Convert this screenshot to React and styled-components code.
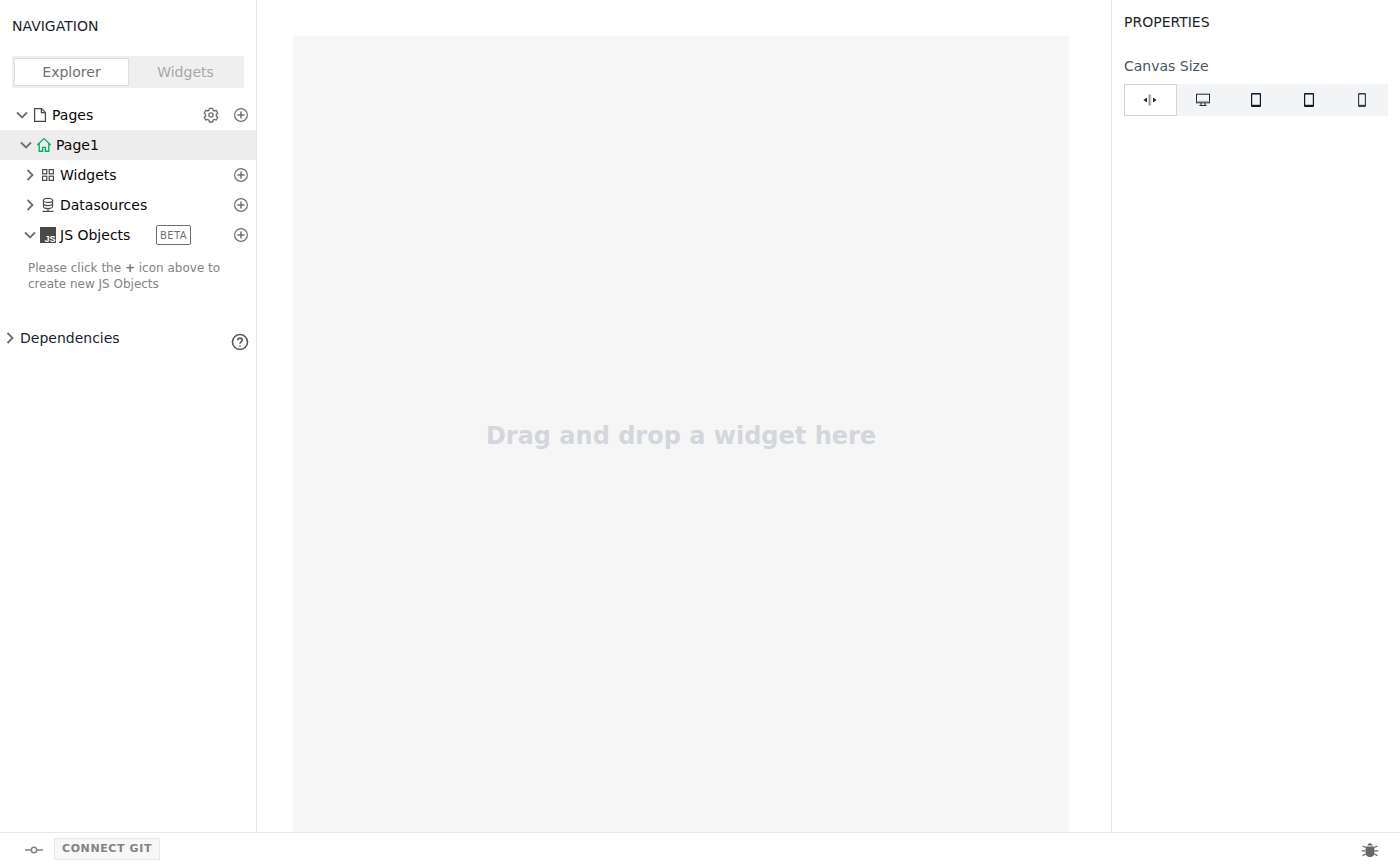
import React from "react";
import styled, { createGlobalStyle } from "styled-components";

const Global = createGlobalStyle`
  html, body { margin: 0; padding: 0; height: 100%; overflow: hidden; background: #fff; }
  body { font-family: "DejaVu Sans", sans-serif; }
  #root { height: 866px; }
  * { box-sizing: border-box; }
`;

const Page = styled.div`
  width: 1400px;
  height: 866px;
  display: flex;
  flex-direction: column;
`;
const Body = styled.div`
  flex: 1;
  min-height: 0;
  display: flex;
`;
const LeftPane = styled.aside`
  width: 257px;
  flex: none;
  border-right: 1px solid #e7e7e7;
  display: flex;
  flex-direction: column;
`;
const PaneTitle = styled.div`
  font-size: 14px;
  line-height: 20px;
  color: #191f2c;
  padding: ${(p) => p.$pad};
`;
const Tabs = styled.div`
  margin: 20px 12px 12px;
  height: 32px;
  background: #efefef;
  padding: 2px;
  display: grid;
  grid-template-columns: 115px 1fr;
`;
const Tab = styled.div`
  font-size: 14px;
  display: flex;
  align-items: center;
  justify-content: center;
  color: ${(p) => (p.$active ? "#716e6e" : "#a9a7a7")};
  background: ${(p) => (p.$active ? "#fff" : "transparent")};
  border: ${(p) => (p.$active ? "1px solid #e0dede" : "none")};
`;
const Row = styled.div`
  height: 30px;
  display: flex;
  align-items: center;
  padding-left: ${(p) => p.$indent}px;
  padding-right: 7px;
  background: ${(p) => (p.$selected ? "#ededed" : "transparent")};
`;
const ChevronSlot = styled.span`
  width: 16px;
  height: 16px;
  flex: none;
  display: flex;
  align-items: center;
  justify-content: center;
  margin-top: ${(p) => p.$top ?? 0}px;
`;
const IconSlot = styled.span`
  width: 16px;
  height: 16px;
  flex: none;
  margin: 0 4px 0 2px;
  display: flex;
  align-items: center;
  justify-content: center;
`;
const RowLabel = styled.span`
  flex: 1;
  font-size: 14px;
  line-height: 20px;
  color: #090707;
  white-space: nowrap;
`;
const DepsLabel = styled.span`
  font-size: 14px;
  line-height: 20px;
  margin-left: 2px;
  color: #191f2c;
  white-space: nowrap;
`;
const Action = styled.span`
  width: 16px;
  height: 16px;
  flex: none;
  display: flex;
  margin-left: ${(p) => p.$gap ?? 0}px;
`;
const Beta = styled.span`
  width: 35px;
  height: 20px;
  margin-right: 42px;
  border: 1px solid #716e6e;
  border-radius: 2px;
  font-size: 10px;
  letter-spacing: 0.4px;
  color: #716e6e;
  display: flex;
  align-items: center;
  justify-content: center;
`;
const Hint = styled.p`
  margin: 10px 24px 0 28px;
  font-size: 12px;
  line-height: 16px;
  color: #858282;
  strong { font-weight: 700; color: #716e6e; }
`;
const DepsRow = styled.div`
  margin-top: 36px;
  height: 20px;
  display: flex;
  align-items: flex-start;
  padding: 0 8px 0 2px;
`;
const HelpIcon = styled.span`
  margin-left: auto;
  margin-top: 5px;
  margin-right: -1px;
  display: flex;
  width: 18px;
  height: 18px;
`;
const Main = styled.main`
  flex: 1;
  min-width: 0;
  padding: 36px 42px 0 36px;
  display: flex;
`;
const Canvas = styled.div`
  flex: 1;
  background: #f6f6f6;
  display: flex;
  justify-content: center;
  padding-top: 382px;
`;
const Placeholder = styled.div`
  font-size: 24px;
  font-weight: 700;
  line-height: 36px;
  height: 36px;
  color: #d3d6dd;
`;
const RightPane = styled.aside`
  width: 289px;
  flex: none;
  border-left: 1px solid #e7e7e7;
  padding: 12px 12px 0;
`;
const FieldLabel = styled.div`
  margin-top: 24px;
  font-size: 14px;
  line-height: 20px;
  color: #4b5563;
`;
const Sizes = styled.div`
  margin-top: 8px;
  height: 32px;
  width: 264px;
  background: #f3f4f6;
  display: grid;
  grid-template-columns: repeat(5, 1fr);
`;
const SizeBtn = styled.div`
  display: flex;
  align-items: center;
  justify-content: center;
  background: ${(p) => (p.$active ? "#fff" : "transparent")};
  border: ${(p) => (p.$active ? "1px solid #d1d5db" : "none")};
`;
const BottomBar = styled.footer`
  height: 34px;
  flex: none;
  border-top: 1px solid #e7e7e7;
  display: flex;
  align-items: center;
  padding: 0 21px 0 25px;
`;
const GitIcon = styled.span`
  width: 18px;
  height: 10px;
  display: flex;
  margin-right: 11px;
`;
const GitBtn = styled.div`
  width: 106px;
  height: 22px;
  background: #f7f7f7;
  border: 1px solid #e7e7e7;
  color: #858282;
  font-size: 11px;
  font-weight: 700;
  letter-spacing: 0.6px;
  display: flex;
  align-items: center;
  justify-content: center;
  margin-top: -1px;
  padding-bottom: 2px;
`;
const BugIcon = styled.span`
  margin-left: auto;
  width: 18px;
  height: 18px;
  display: flex;
`;

const Chevron = ({ open }) => (
  <svg width="16" height="16" viewBox="0 0 16 16" fill="none" stroke="#716e6e" strokeWidth="1.8">
    {open ? <path d="M3 5.5 8 10.5 13 5.5" /> : <path d="M5.5 3 10.5 8 5.5 13" />}
  </svg>
);
const Plus = () => (
  <svg width="16" height="16" viewBox="0 0 16 16" fill="none" stroke="#716e6e" strokeWidth="1.2">
    <circle cx="8" cy="8" r="6.4" />
    <path d="M8 4.5v7M4.5 8h7" strokeWidth="1.5" />
  </svg>
);
const Gear = () => (
  <svg width="16" height="16" viewBox="0 0 24 24" fill="none" stroke="#716e6e" strokeWidth="2">
    <path d="M9.6 2.5h4.8l.7 2.9 1.7 1 2.9-.8 2.4 4.1-2.1 2.1v2l2.1 2.1-2.4 4.1-2.9-.8-1.7 1-.7 2.8H9.6l-.7-2.8-1.7-1-2.9.8-2.4-4.1 2.1-2.1v-2L1.9 9.7l2.4-4.1 2.9.8 1.7-1z" transform="translate(0 -.5)" />
    <circle cx="12" cy="12" r="3.2" />
  </svg>
);
const FileIcon = () => (
  <svg width="16" height="16" viewBox="0 0 16 16" fill="none" stroke="#4b4848" strokeWidth="1.3">
    <path d="M2.6 1.6h7l3.8 3.8v9H2.6zM9.4 1.6v4h4" />
  </svg>
);
const Home = () => (
  <svg width="16" height="16" viewBox="0 0 16 16" fill="none" stroke="#03b365" strokeWidth="1.4">
    <path d="M1.2 8 8 1.6 14.8 8M3.2 6.6v7.6h3.4v-3.8h2.8v3.8h3.4V6.6" />
  </svg>
);
const Grid = () => (
  <svg width="14" height="14" viewBox="0 0 14 14" fill="none" stroke="#4b4848" strokeWidth="1.2">
    <rect x="1.6" y="1.6" width="4.2" height="4.2" />
    <rect x="8.2" y="1.6" width="4.2" height="4.2" />
    <rect x="1.6" y="8.2" width="4.2" height="4.2" />
    <rect x="8.2" y="8.2" width="4.2" height="4.2" />
  </svg>
);
const Db = () => (
  <svg width="16" height="16" viewBox="0 0 16 16" fill="none" stroke="#4b4848" strokeWidth="1.1">
    <ellipse cx="8" cy="3.4" rx="4.6" ry="2" />
    <path d="M3.4 3.4v6.2c0 1.1 2 2 4.6 2s4.6-.9 4.6-2V3.4M3.4 6.6c0 1.1 2 2 4.6 2s4.6-.9 4.6-2M8 11.6v2.6M2.5 14.4h11" />
  </svg>
);
const Js = () => (
  <svg width="16" height="16" viewBox="0 0 16 16">
    <rect width="16" height="16" fill="#4b4848" />
    <text x="15.5" y="14.5" textAnchor="end" fontSize="9" fontWeight="700" fontFamily="Liberation Sans, sans-serif" fill="#fff">JS</text>
  </svg>
);
const Help = () => (
  <svg width="18" height="18" viewBox="0 0 18 18" fill="none" stroke="#5a5858" strokeWidth="1.6">
    <circle cx="9" cy="9" r="7.5" />
    <path d="M6.8 7.2c0-1.3 1-2.1 2.3-2.1s2.2.8 2.2 2c0 1.8-2.3 1.7-2.3 3.6" />
    <circle cx="9" cy="13" r=".8" fill="#5a5858" stroke="none" />
  </svg>
);
const FluidIcon = () => (
  <svg width="14" height="12" viewBox="0 0 14 12">
    <rect x="5.6" y="0.5" width="1.4" height="11" fill="#8b9099" />
    <rect x="7" y="0.5" width="1.4" height="11" fill="#c4c8ce" />
    <path d="M0.4 6 4 3.4v5.2zM13.6 6 10 3.4v5.2z" fill="#1f2937" />
  </svg>
);
const Desktop = () => (
  <svg width="14" height="14" viewBox="0 0 14 14" fill="none" stroke="#1f2937" strokeWidth="1">
    <rect x="0.5" y="1.2" width="13" height="8.6" />
    <path d="M0.5 8.4h13" stroke="#9ca3af" />
    <path d="M5 9.8v2.2M9 9.8v2.2M3.4 12.5h7.2" />
  </svg>
);
const Tablet = ({ w = 10, color = "#111827" }) => (
  <svg width={w} height="14" viewBox={`0 0 ${w} 14`} fill="none">
    <rect x="0.6" y="0.6" width={w - 1.2} height="12.8" rx="0.6" stroke={color} strokeWidth="1.2" />
    <rect x="0.6" y="11.8" width={w - 1.2} height="1.6" fill={color} />
    <rect x="0.6" y="0.6" width={w - 1.2} height="0.8" fill={color} />
  </svg>
);
const GitMark = () => (
  <svg width="18" height="10" viewBox="0 0 18 10" fill="none" stroke="#858282" strokeWidth="1.6">
    <circle cx="9" cy="5" r="2.7" />
    <path d="M0 5h6.2M11.8 5H18" />
  </svg>
);
const Bug = () => (
  <svg width="18" height="18" viewBox="0 0 18 18" fill="#666" stroke="#666">
    <path d="M6.5 4.6c0-1.4 1.1-2.4 2.5-2.4s2.5 1 2.5 2.4z" stroke="none" />
    <path d="M4.6 5.4h8.8v7.2c0 2-1.9 3.6-4.4 3.6s-4.4-1.6-4.4-3.6z" stroke="none" />
    <path d="M4.6 6.5 1.6 5M4.6 9.8H.8M4.6 13l-3 1.6M13.4 6.5l3-1.5M13.4 9.8h3.8M13.4 13l3 1.6" strokeWidth="1.2" fill="none" />
  </svg>
);

const TreeRow = ({ indent, open, icon, label, selected, children }) => (
  <Row $indent={indent} $selected={selected}>
    <ChevronSlot><Chevron open={open} /></ChevronSlot>
    <IconSlot>{icon}</IconSlot>
    <RowLabel>{label}</RowLabel>
    {children}
  </Row>
);

export default function App() {
  return (
    <Page>
      <Global />
      <Body>
        <LeftPane>
          <PaneTitle $pad="16px 12px 0">NAVIGATION</PaneTitle>
          <Tabs>
            <Tab $active>Explorer</Tab>
            <Tab>Widgets</Tab>
          </Tabs>
          <TreeRow indent={14} open icon={<FileIcon />} label="Pages">
            <Action><Gear /></Action>
            <Action $gap={14}><Plus /></Action>
          </TreeRow>
          <TreeRow indent={18} open selected icon={<Home />} label="Page1" />
          <TreeRow indent={22} icon={<Grid />} label="Widgets">
            <Action><Plus /></Action>
          </TreeRow>
          <TreeRow indent={22} icon={<Db />} label="Datasources">
            <Action><Plus /></Action>
          </TreeRow>
          <TreeRow indent={22} open icon={<Js />} label="JS Objects">
            <Beta>BETA</Beta>
            <Action><Plus /></Action>
          </TreeRow>
          <Hint>Please click the <strong>+</strong> icon above to create new JS Objects</Hint>
          <DepsRow>
            <ChevronSlot $top={2}><Chevron /></ChevronSlot>
            <DepsLabel>Dependencies</DepsLabel>
            <HelpIcon><Help /></HelpIcon>
          </DepsRow>
        </LeftPane>
        <Main>
          <Canvas>
            <Placeholder>Drag and drop a widget here</Placeholder>
          </Canvas>
        </Main>
        <RightPane>
          <PaneTitle $pad="0">PROPERTIES</PaneTitle>
          <FieldLabel>Canvas Size</FieldLabel>
          <Sizes>
            <SizeBtn $active><FluidIcon /></SizeBtn>
            <SizeBtn><Desktop /></SizeBtn>
            <SizeBtn><Tablet /></SizeBtn>
            <SizeBtn><Tablet /></SizeBtn>
            <SizeBtn><Tablet w={8} color="#374151" /></SizeBtn>
          </Sizes>
        </RightPane>
      </Body>
      <BottomBar>
        <GitIcon><GitMark /></GitIcon>
        <GitBtn>CONNECT GIT</GitBtn>
        <BugIcon><Bug /></BugIcon>
      </BottomBar>
    </Page>
  );
}
